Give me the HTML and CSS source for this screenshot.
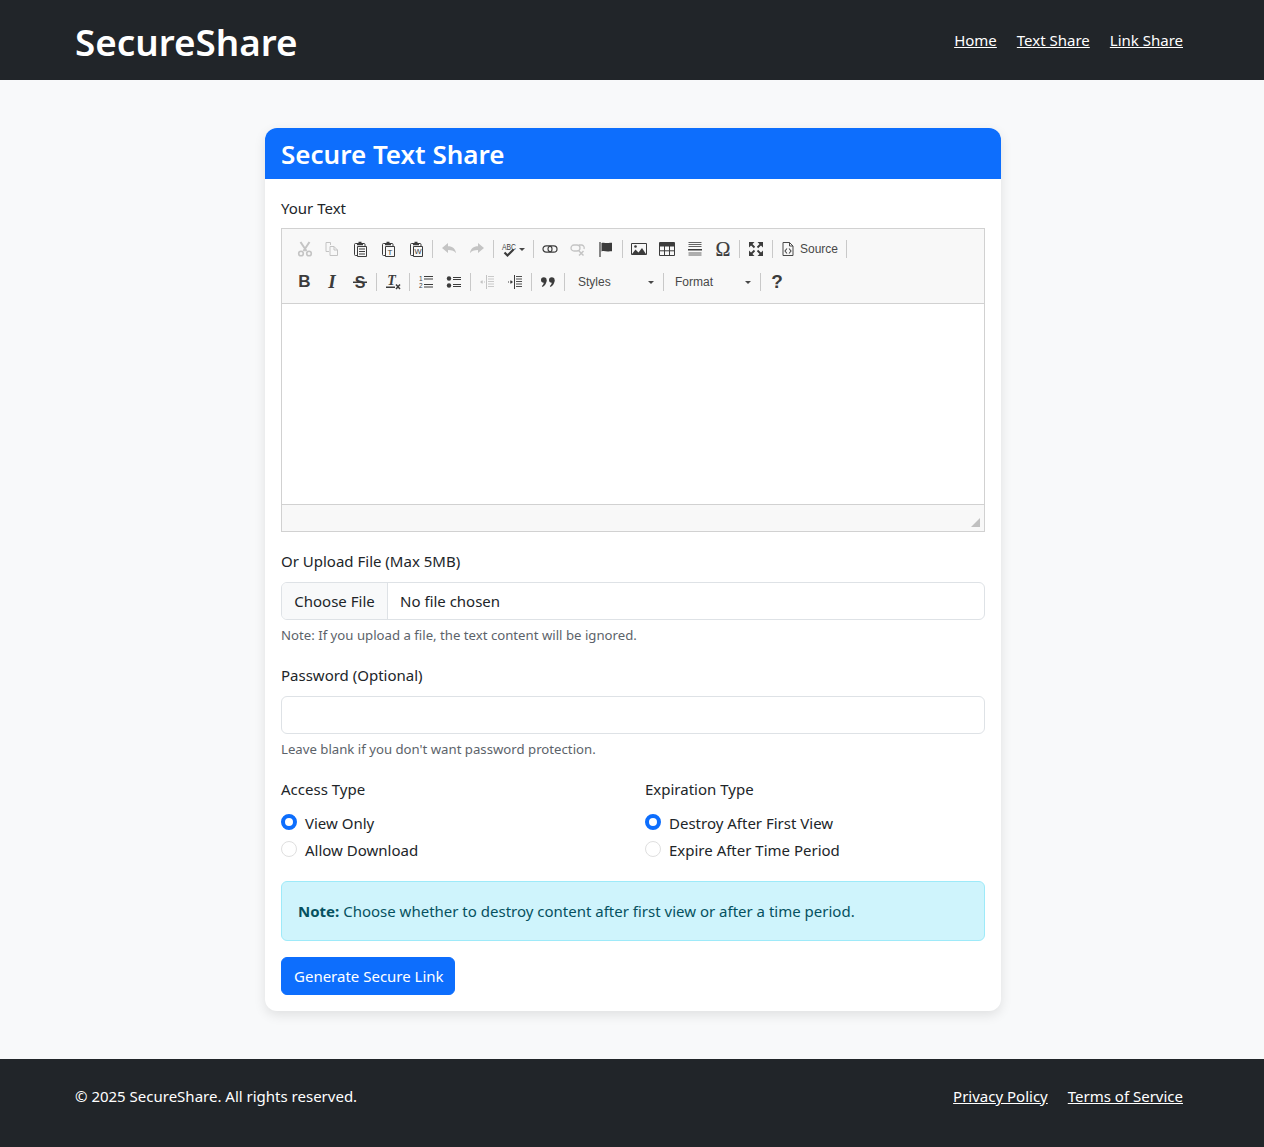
FILE: index.html
```html
<!DOCTYPE html>
<html lang="en">
<head>
    <meta charset="UTF-8">
    <meta name="viewport" content="width=device-width, initial-scale=1.0">
    <title>SecureShare - Secure Text Share</title>
    <link rel="stylesheet" href="styles.css">
</head>
<body>
    <header class="site-header">
        <div class="container header-inner">
            <a class="brand" href="#">SecureShare</a>
            <nav class="site-nav">
                <a href="#">Home</a>
                <a href="#">Text Share</a>
                <a href="#">Link Share</a>
            </nav>
        </div>
    </header>

    <main class="page-main">
        <div class="card">
            <h2 class="card-header">Secure Text Share</h2>
            <form class="card-body">
                <div class="field field-editor">
                    <label class="form-label">Your Text</label>
                    <div class="editor">
                        <div class="editor-top">
                            <div class="tool-row">
                                <span class="tool off"><svg viewBox="0 0 16 16"><path d="M3.500 1l6 9M12.500 1l-6 9" fill="none" stroke="currentColor" stroke-width="2"/><circle cx="4" cy="12.500" r="2.300" fill="none" stroke="currentColor" stroke-width="1.600"/><circle cx="12" cy="12.500" r="2.300" fill="none" stroke="currentColor" stroke-width="1.600"/></svg></span>
                                <span class="tool off"><svg viewBox="0 0 16 16"><path d="M6.500 4V1.500H2v9h3" fill="none" stroke="currentColor"/><path d="M6 5.500h4l3.500 3.500v5.500H6zM10 5.500V9h3.500" fill="none" stroke="currentColor"/></svg></span>
                                <span class="tool"><svg viewBox="0 0 16 16"><path d="M5 2.500H3.500q-1 0-1 1v10q0 1 1 1H5M11 2.500h1q1 0 1 1v2" fill="none" stroke="currentColor"/><path d="M5 2h1.500V.8h3V2H11v2.300H5z" fill="currentColor"/><path d="M5.500 5.500h9v10h-9z" fill="none" stroke="currentColor"/><path d="M7 8h6M7 10.500h6M7 13h6" stroke="currentColor"/></svg></span>
                                <span class="tool"><svg viewBox="0 0 16 16"><path d="M5 2.500H3.500q-1 0-1 1v10q0 1 1 1H5M11 2.500h1q1 0 1 1v2" fill="none" stroke="currentColor"/><path d="M5 2h1.500V.8h3V2H11v2.300H5z" fill="currentColor"/><path d="M5.500 5.500h9v10h-9z" fill="none" stroke="currentColor"/><text class="icon-text" x="10" y="13.500" font-size="8" text-anchor="middle">T</text></svg></span>
                                <span class="tool"><svg viewBox="0 0 16 16"><path d="M5 2.500H3.500q-1 0-1 1v10q0 1 1 1H5M11 2.500h1q1 0 1 1v2" fill="none" stroke="currentColor"/><path d="M5 2h1.500V.8h3V2H11v2.300H5z" fill="currentColor"/><path d="M5.500 5.500h9v10h-9z" fill="none" stroke="currentColor"/><text class="icon-text" x="10" y="13.300" font-size="7.500" text-anchor="middle">W</text></svg></span>
                                <i class="sep"></i>
                                <span class="tool off"><svg viewBox="0 0 16 16"><path d="M1 7l6-5v3.200c4.500 0 7.500 2.300 8 7-1.500-2.500-4-3.200-8-3.200V12z" fill="currentColor"/></svg></span>
                                <span class="tool off"><svg viewBox="0 0 16 16"><path d="M15 7L9 2v3.200c-4.500 0-7.500 2.300-8 7 1.500-2.500 4-3.200 8-3.200V12z" fill="currentColor"/></svg></span>
                                <i class="sep"></i>
                                <span class="tool tool-spell"><svg viewBox="0 0 16 16"><text class="icon-text" x="8" y="8.500" font-size="9" text-anchor="middle" textLength="14" lengthAdjust="spacingAndGlyphs">ABC</text><path d="M3.500 11.500l3 3 6-6" fill="none" stroke="currentColor" stroke-width="2.200"/></svg><i class="caret"></i></span>
                                <i class="sep"></i>
                                <span class="tool"><svg viewBox="0 0 16 16"><rect x="1" y="4.800" width="9" height="6.400" rx="3.200" fill="none" stroke="currentColor" stroke-width="1.200"/><rect x="6" y="4.800" width="9" height="6.400" rx="3.200" fill="none" stroke="currentColor" stroke-width="1.200"/></svg></span>
                                <span class="tool off"><svg viewBox="0 0 16 16"><rect x="1" y="4" width="9" height="6" rx="3" fill="none" stroke="currentColor" stroke-width="1.300"/><path d="M9 4h3a3 3 0 012 4" fill="none" stroke="currentColor" stroke-width="1.300"/><path d="M9 10l4.500 4.500M13.500 10L9 14.500" stroke="currentColor" stroke-width="1.500"/></svg></span>
                                <span class="tool"><svg viewBox="0 0 16 16"><path d="M2 1v15" stroke="currentColor" stroke-width="1.200"/><path d="M3.500 2c3-1 5 .8 8.500-.3h2v8.500h-2c-3.500 1-5.500-.8-8.500.2z" fill="currentColor"/></svg></span>
                                <i class="sep"></i>
                                <span class="tool"><svg viewBox="0 0 16 16"><path d="M.5 2.500h15v11H.5z" fill="none" stroke="currentColor"/><path d="M1 13l3.500-4.500 3 3 3.500-4.500 4 6z" fill="currentColor"/><circle cx="4.500" cy="5.500" r="1.300" fill="currentColor"/></svg></span>
                                <span class="tool"><svg viewBox="0 0 16 16"><path d="M.5 1.500h15v13H.5z" fill="none" stroke="currentColor"/><path d="M.5 2h15v3.500H.5z" fill="currentColor"/><path d="M5.500 5v9M10.500 5v9M1 9.800h14" stroke="currentColor"/></svg></span>
                                <span class="tool"><svg viewBox="0 0 16 16"><path d="M1.500 1.500h13M1.500 3.500h13M1.500 5.500h13M1.500 12h13M1.500 14h13" stroke="currentColor" stroke-width=".8"/><path d="M1 8h14v1.500H1z" fill="currentColor"/></svg></span>
                                <span class="tool tool-omega">&#937;</span>
                                <i class="sep"></i>
                                <span class="tool"><svg viewBox="0 0 16 16"><path d="M1 1h5.500L1 6.500zM15 1v5.500L9.500 1zM1 15v-5.500L6.500 15zM15 15H9.500L15 9.500z" fill="currentColor"/><path d="M3 3l3.500 3.500M13 3L9.500 6.500M3 13l3.500-3.500M13 13L9.500 9.500" stroke="currentColor" stroke-width="1.800"/></svg></span>
                                <i class="sep"></i>
                                <span class="tool tool-source"><svg viewBox="0 0 16 16"><path d="M3 1.500h6.500l3.500 3.500v9.500H3zM9.500 1.500V5H13" fill="none" stroke="currentColor"/><path d="M7 7.500L5 10l2 2.500M9 7.500l2 2.500-2 2.500" fill="none" stroke="currentColor" stroke-width="1.100"/></svg><span>Source</span></span>
                                <i class="sep"></i>
                            </div>
                            <div class="tool-row">
                                <span class="tool tool-bold">B</span>
                                <span class="tool tool-italic">I</span>
                                <span class="tool"><svg viewBox="0 0 16 16"><text class="icon-bold" x="8" y="13.500" font-size="16" text-anchor="middle">S</text><path d="M1 7.500h14V9H1z" fill="currentColor"/></svg></span>
                                <i class="sep"></i>
                                <span class="tool"><svg viewBox="0 0 16 16"><text class="icon-serif" x="6.500" y="11" font-size="14" text-anchor="middle">T</text><path d="M1 12.500h9V14H1z" fill="currentColor"/><path d="M11 10.500l4 4.500M15 10.500L11 15" stroke="currentColor" stroke-width="1.500"/></svg></span>
                                <i class="sep"></i>
                                <span class="tool"><svg viewBox="0 0 16 16"><path d="M6 2.500h9M6 5h9M6 10.500h9M6 13h9" stroke="currentColor" stroke-width="1.100"/><text class="icon-text" x="2.800" y="6.500" font-size="6.500" text-anchor="middle">1</text><text class="icon-text" x="2.800" y="14" font-size="6.500" text-anchor="middle">2</text></svg></span>
                                <span class="tool"><svg viewBox="0 0 16 16"><circle cx="3" cy="4.500" r="2.200" fill="currentColor"/><circle cx="3" cy="11.500" r="2.200" fill="currentColor"/><path d="M7 3.500h8M7 5.500h8M7 10.500h8M7 12.500h8" stroke="currentColor" stroke-width="1"/></svg></span>
                                <i class="sep"></i>
                                <span class="tool off"><svg viewBox="0 0 16 16"><path d="M9 2.500h6M9 5h6M9 7.500h6M9 10h6M9 12.500h6" stroke="currentColor" stroke-width=".9"/><path d="M7.500 1v14" stroke="currentColor"/><path d="M1 8l2.500-2v4z" fill="currentColor"/><path d="M3 8h3" stroke="currentColor" stroke-dasharray="1 1"/></svg></span>
                                <span class="tool"><svg viewBox="0 0 16 16"><path d="M9 2.500h6M9 5h6M9 7.500h6M9 10h6M9 12.500h6" stroke="currentColor" stroke-width=".9"/><path d="M7.500 1v14" stroke="currentColor"/><path d="M6 8L3.500 6v4z" fill="currentColor"/><path d="M1 8h3" stroke="currentColor" stroke-dasharray="1 1"/></svg></span>
                                <i class="sep"></i>
                                <span class="tool"><svg viewBox="0 0 16 16"><circle cx="3.800" cy="6" r="2.800" fill="currentColor"/><path d="M6.600 6c0 3.300-1.500 5.600-4 7l-.8-1c1.400-1 2-2.300 2-4z" fill="currentColor"/><circle cx="11.800" cy="6" r="2.800" fill="currentColor"/><path d="M14.600 6c0 3.300-1.500 5.600-4 7l-.8-1c1.400-1 2-2.300 2-4z" fill="currentColor"/></svg></span>
                                <i class="sep"></i>
                                <span class="combo combo-styles"><span>Styles</span><i class="caret"></i></span>
                                <i class="sep"></i>
                                <span class="combo combo-format"><span>Format</span><i class="caret"></i></span>
                                <i class="sep"></i>
                                <span class="tool tool-help">?</span>
                            </div>
                        </div>
                        <div class="editor-content"></div>
                        <div class="editor-bottom"><i class="resizer"></i></div>
                    </div>
                </div>

                <div class="field field-upload">
                    <label class="form-label" for="file">Or Upload File (Max 5MB)</label>
                    <input class="form-control" type="file" id="file">
                    <div class="form-text">Note: If you upload a file, the text content will be ignored.</div>
                </div>

                <div class="field">
                    <label class="form-label" for="password">Password (Optional)</label>
                    <input class="form-control" type="password" id="password">
                    <div class="form-text">Leave blank if you don't want password protection.</div>
                </div>

                <div class="option-grid">
                    <div>
                        <label class="form-label">Access Type</label>
                        <label class="form-check"><input type="radio" name="access" checked> View Only</label>
                        <label class="form-check"><input type="radio" name="access"> Allow Download</label>
                    </div>
                    <div>
                        <label class="form-label">Expiration Type</label>
                        <label class="form-check"><input type="radio" name="expire" checked> Destroy After First View</label>
                        <label class="form-check"><input type="radio" name="expire"> Expire After Time Period</label>
                    </div>
                </div>

                <div class="alert"><strong>Note:</strong> Choose whether to destroy content after first view or after a time period.</div>

                <button class="btn-primary" type="button">Generate Secure Link</button>
            </form>
        </div>
    </main>

    <footer class="site-footer">
        <div class="container footer-inner">
            <span>&copy; 2025 SecureShare. All rights reserved.</span>
            <nav class="site-nav">
                <a href="#">Privacy Policy</a>
                <a href="#">Terms of Service</a>
            </nav>
        </div>
    </footer>
</body>
</html>
```

FILE: styles.css
```css
/* Common */
:root {
    --dark: #212529;
    --blue: #0d6efd;
    --light: #f8f9fa;
    --line: #dee2e6;
    --cke-line: #d1d1d1;
    --cke-bg: #f8f8f8;
    --cke-icon: #3c3c3c;
}
* { box-sizing: border-box; }
body {
    margin: 0;
    background: var(--light);
    color: var(--dark);
    font-family: "Noto Sans", sans-serif;
    font-size: 15px;
    line-height: 24px;
}
.container {
    width: 1140px;
    margin: 0 auto;
    padding: 0 12px 0 13px;
}

/* Header & footer */
.site-header { background: var(--dark); padding: 16px 0; height: 80px; }
.header-inner, .footer-inner {
    display: flex;
    justify-content: space-between;
    align-items: center;
}
.header-inner { height: 48px; }
.brand {
    margin-top: 4px;
    color: #fff;
    font-size: 36.8px;
    font-weight: 600;
    line-height: 52px;
    text-decoration: none;
}
.site-nav { display: flex; gap: 20px; padding-right: 7px; }
.site-nav a { color: #fff; text-decoration: underline; }
.site-footer { background: var(--dark); color: #fff; padding: 25px 0 39px; margin-top: 48px; }

/* Card */
.page-main { padding-top: 48px; }
.card {
    width: 736px;
    margin-left: 265px;
    background: #fff;
    border-radius: 12px;
    box-shadow: 0 4px 12px rgba(0, 0, 0, 0.1);
    overflow: hidden;
}
.card-header {
    margin: 0;
    height: 51px;
    padding: 0 16px;
    background: var(--blue);
    color: #fff;
    font-size: 26px;
    font-weight: 600;
    line-height: 52px;
}
.card-body { padding: 16px; }

/* Form */
.field { margin-bottom: 16px; }
.field-editor { margin-bottom: 17px; }
.field-editor .form-label { padding-top: 1px; margin-bottom: 8px; }
.form-label { display: block; margin-bottom: 9px; }
.form-control {
    display: block;
    width: 100%;
    height: 38px;
    padding: 6px 12px;
    background: #fff;
    border: 1px solid var(--line);
    border-radius: 6px;
    color: var(--dark);
    font: inherit;
}
input[type="file"].form-control { padding: 0; line-height: 36px; }
.form-control::file-selector-button {
    height: 36px;
    margin: 0 12px 0 0;
    padding: 0 12px;
    width: 106px;
    background: var(--light);
    border: 0;
    border-right: 1px solid var(--line);
    color: var(--dark);
    font: inherit;
}
.form-text { margin-top: 4px; font-size: 13.2px; line-height: 23px; color: #5c636a; }

.option-grid {
    display: grid;
    grid-template-columns: 1fr 1fr;
    column-gap: 24px;
    margin-bottom: 16px;
}
.option-grid .form-label { margin-bottom: 10px; }
.form-check {
    display: flex;
    align-items: center;
    min-height: 24px;
    margin-bottom: 3px;
    gap: 8px;
}
.form-check input {
    appearance: none;
    flex: none;
    width: 16px;
    height: 16px;
    margin: 0 0 2px;
    background: #fff;
    border: 1px solid #dfdfdf;
    border-radius: 50%;
}
.form-check input:checked { border: 4px solid var(--blue); }

.alert {
    height: 60px;
    margin-bottom: 16px;
    padding: 17px 16px;
    background: #cff4fc;
    border: 1px solid #9eeaf9;
    border-radius: 6px;
    color: #055160;
}
.alert strong { font-weight: 700; }
.btn-primary {
    display: block;
    height: 38px;
    padding: 0 10px 0 12px;
    background: var(--blue);
    border: 1px solid var(--blue);
    border-radius: 6px;
    color: #fff;
    font: inherit;
}

/* Text editor */
.editor {
    height: 304px;
    border: 1px solid var(--cke-line);
    display: flex;
    flex-direction: column;
}
.editor-top {
    height: 75px;
    padding: 8px 8px 0 9px;
    background: var(--cke-bg);
    border-bottom: 1px solid var(--cke-line);
}
.tool-row { display: flex; align-items: center; height: 24px; margin-bottom: 9px; color: var(--cke-icon); }
.tool {
    display: flex;
    align-items: center;
    justify-content: center;
    flex: none;
    width: 28px;
    height: 24px;
}
.tool:first-child { width: 27px; }
.tool svg { width: 16px; height: 16px; display: block; overflow: visible; }
.tool.off { color: #c4c4c4; }
.icon-text { font-family: "Liberation Sans", Arial, sans-serif; fill: currentColor; }
.icon-bold { font-family: "Liberation Sans", Arial, sans-serif; font-weight: 700; fill: currentColor; }
.icon-serif { font-family: "Liberation Serif", serif; font-style: italic; font-weight: 700; fill: currentColor; }
.sep { flex: none; width: 1px; height: 18px; margin: 0 2px; background: #c9c9c9; }
.caret {
    display: block;
    flex: none;
    width: 0;
    height: 0;
    border: 3px solid transparent;
    border-top-color: #484848;
    border-bottom-width: 0;
}
.tool-spell { width: 35px; gap: 2px; justify-content: flex-start; padding-left: 5px; }
.tool-source, .combo {
    font-family: "Liberation Sans", Arial, sans-serif;
    font-size: 12px;
    color: #484848;
}
.tool-source { width: 69px; justify-content: flex-start; padding-left: 5px; gap: 4px; }
.tool-bold { font: 700 17px "Liberation Sans", Arial, sans-serif; }
.tool-italic { font: italic 700 19px "Liberation Serif", serif; }
.tool-omega { font-family: "Liberation Serif", serif; font-size: 20px; color: #3c3c3c; -webkit-text-stroke: 0.2px #3c3c3c; }
.tool-help { font-family: "Liberation Sans", Arial, sans-serif; font-size: 19px; font-weight: 700; }
.combo {
    display: flex;
    align-items: center;
    justify-content: space-between;
    height: 24px;
    padding: 0 7px 0 9px;
}
.combo-styles { width: 94px; padding-left: 11px; }
.combo-format { width: 92px; }
.editor-content { height: 200px; background: #fff; }
.editor-bottom {
    position: relative;
    flex: 1;
    background: var(--cke-bg);
    border-top: 1px solid var(--cke-line);
}
.resizer {
    position: absolute;
    right: 4px;
    bottom: 4px;
    width: 0;
    height: 0;
    border-style: solid;
    border-width: 0 0 9px 9px;
    border-color: transparent transparent #c0c0c0 transparent;
}
```
